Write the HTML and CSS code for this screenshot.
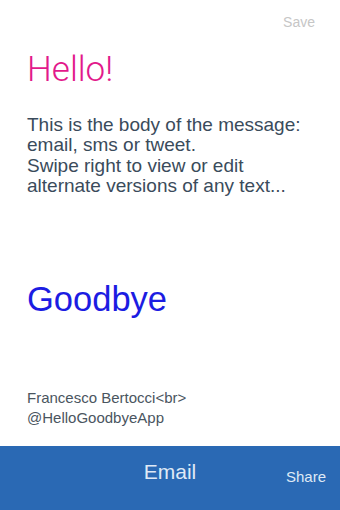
FILE: index.html
```html
<!DOCTYPE html>
<html>
<head>
<meta charset="utf-8">
<link rel="stylesheet" href="styles.css">
</head>
<body>
<div class="screen">
  <header class="topbar"><span class="save">Save</span></header>
  <main class="content">
    <h1 class="hello">Hello!</h1>
    <p class="message">This is the body of the message:<br>email, sms or tweet.<br>Swipe right to view or edit<br>alternate versions of any text...</p>
    <h2 class="goodbye">Goodbye</h2>
    <p class="signature">Francesco Bertocci&lt;br&gt;<br>@HelloGoodbyeApp</p>
  </main>
  <footer class="bottombar">
    <span class="email">Email</span>
    <span class="share">Share</span>
  </footer>
</div>
</body>
</html>
```
FILE: styles.css
```css
* { box-sizing: border-box; }
html, body { margin: 0; padding: 0; }
body {
  background: #ffffff;
  font-family: "Liberation Sans", Arial, sans-serif;
}
.screen {
  width: 340px;
  height: 510px;
  display: flex;
  flex-direction: column;
  overflow: hidden;
}
.topbar {
  height: 40px;
  padding: 12px 25px 0 0;
  display: flex;
  justify-content: flex-end;
}
.save {
  font-size: 14px;
  line-height: 20px;
  color: #c6c6c6;
}
.content {
  flex: 1;
  padding-left: 27px;
  display: flex;
  flex-direction: column;
}
.hello {
  margin: 10px 0 0 0;
  font-family: Roboto, "Liberation Sans", sans-serif;
  font-weight: 300;
  font-size: 35px;
  line-height: 40px;
  color: #e2198b;
}
.message {
  margin: 25px 0 0 0;
  font-size: 19px;
  line-height: 20.4px;
  color: #3a4b5b;
}
.goodbye {
  margin: 82px 0 0 0;
  font-weight: 400;
  font-size: 34.5px;
  line-height: 40px;
  color: #1c1ce2;
}
.signature {
  margin: 69px 0 0 0;
  font-size: 15px;
  line-height: 20px;
  color: #4a5560;
}
.bottombar {
  height: 64px;
  background: #2a69b4;
  position: relative;
  display: flex;
  justify-content: center;
  align-items: flex-start;
  padding-top: 14px;
}
.email {
  font-size: 21px;
  line-height: 24px;
  color: #dfe9f6;
}
.share {
  position: absolute;
  right: 14px;
  top: 21px;
  font-size: 15px;
  line-height: 20px;
  color: #dfe9f6;
}
```
